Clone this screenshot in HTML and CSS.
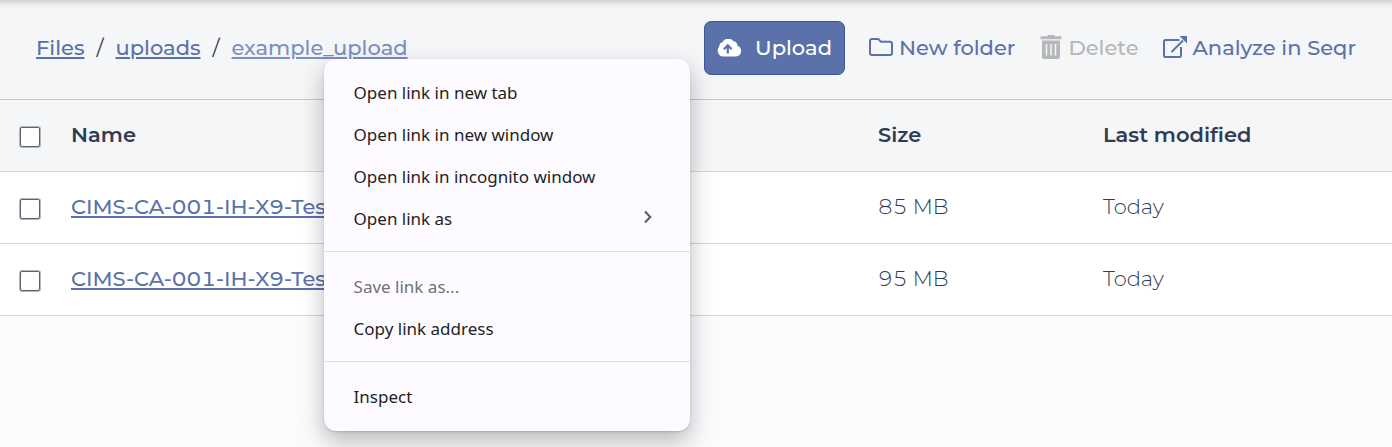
FILE: index.html
```html
<!DOCTYPE html>
<html lang="en">
<head>
<meta charset="utf-8">
<meta name="viewport" content="width=device-width, initial-scale=1">
<title>Files</title>
<link rel="stylesheet" href="styles.css">
</head>
<body>
<header class="toolbar">
  <nav class="crumbs" aria-label="Breadcrumb">
    <a href="#">Files</a>
    <span class="slash">/</span>
    <a href="#">uploads</a>
    <span class="slash">/</span>
    <span class="crumb-current">
      <a class="active" href="#">example_upload</a>
      <div class="menu" role="menu">
        <div class="menu-group">
          <button type="button" role="menuitem">Open link in new tab</button>
          <button type="button" role="menuitem">Open link in new window</button>
          <button type="button" role="menuitem">Open link in incognito window</button>
          <button type="button" role="menuitem" aria-haspopup="true">Open link as
            <svg width="10" height="18" viewBox="0 0 10 18" aria-hidden="true"><path d="M2 1.500 7.300 7 2 12.500" fill="none" stroke="#5a5a5e" stroke-width="2"/></svg>
          </button>
        </div>
        <div class="menu-group">
          <button type="button" role="menuitem" disabled>Save link as...</button>
          <button type="button" role="menuitem">Copy link address</button>
        </div>
        <div class="menu-group">
          <button type="button" role="menuitem">Inspect</button>
        </div>
      </div>
    </span>
  </nav>
  <div class="actions">
    <button type="button" class="upload">
      <svg width="24" height="18" viewBox="0 0 24 18" aria-hidden="true"><path fill="#fff" d="M6 17.500A6 6 0 0 1 2.200 7.600 4.500 4.500 0 0 1 5.500 3.300 6.500 6.500 0 0 1 16.500 2.300 4 4 0 0 1 20.400 6.800 5.500 5.500 0 0 1 19 17.500Z"/><path d="M10.800 14.500V6.500M6.900 10.200l3.900-3.900 3.900 3.900" fill="none" stroke="#5a71aa" stroke-width="2.200"/></svg>
      Upload
    </button>
    <button type="button" class="action">
      <svg width="24" height="20" viewBox="0 0 24 20" aria-hidden="true"><path d="M1 3Q1 1 3 1H8.500Q9.500 1 10.200 1.800L12 3.800H21Q23 3.800 23 5.800V15Q23 17 21 17H3Q1 17 1 15Z" fill="none" stroke="#5a71aa" stroke-width="2"/></svg>
      New folder
    </button>
    <button type="button" class="action" disabled>
      <svg width="23" height="26" viewBox="-1 0 23 26" aria-hidden="true"><path fill="#b5b7b9" d="M.5 1.300H7L8 0h6l1 1.300h6.500v3H.5ZM2 5.500h18V22a2 2 0 0 1-2 2H4a2 2 0 0 1-2-2Z"/><path d="M6.500 9v11.500M11 9v11.500M15.500 9v11.500" stroke="#f4f6f8" stroke-width="1.500"/></svg>
      Delete
    </button>
    <button type="button" class="action">
      <svg width="24" height="24" viewBox="0 0 24 24" aria-hidden="true"><path d="M16.500 4H2.500Q1 4 1 5.500V19.500Q1 21 2.500 21H16.500Q18 21 18 19.500V11M8.500 16 20 4.500" fill="none" stroke="#5a71aa" stroke-width="2"/><path d="M16.500 0H24V7.500Z" fill="#5a71aa"/></svg>
      Analyze in Seqr
    </button>
  </div>
</header>
<table class="files">
  <thead>
    <tr><th class="col-check"><input type="checkbox" aria-label="Select all"></th><th>Name</th><th class="col-size">Size</th><th class="col-date">Last modified</th></tr>
  </thead>
  <tbody>
    <tr><td><input type="checkbox" aria-label="Select first file"></td><td><a href="#">CIMS-CA-001-IH-X9-Test</a></td><td>85 MB</td><td>Today</td></tr>
    <tr><td><input type="checkbox" aria-label="Select second file"></td><td><a href="#">CIMS-CA-001-IH-X9-Test</a></td><td>95 MB</td><td>Today</td></tr>
  </tbody>
</table>
</body>
</html>
```
FILE: styles.css
```css
* { box-sizing: border-box; }

body {
  margin: 0;
  min-height: 100vh;
  background: #fafbfd;
  color: #323c50;
  font: 400 21px/30px Montserrat, Inter, sans-serif;
}

button { font: inherit; border: 0; background: none; padding: 0; cursor: pointer; }
svg { flex: none; }

a {
  color: #5a71aa;
  font-weight: 500;
  text-decoration: underline 2px;
  text-underline-offset: 2px;
}

.toolbar {
  display: flex;
  justify-content: space-between;
  align-items: center;
  padding: 21px 36px 24px;
  background: #f4f6f8;
  border-bottom: 1px solid #c3c7ca;
  box-shadow: inset 0 8px 8px -8px rgba(0, 0, 0, .3);
}

.crumbs { display: flex; gap: 12px; white-space: nowrap; }
.crumb-current { position: relative; }
.active { color: #7c8fc0; }

.actions { display: flex; align-items: center; gap: 24px; }

.upload, .action {
  display: flex;
  align-items: center;
  gap: 6px;
  color: #5a71aa;
  font-weight: 500;
  white-space: nowrap;
}

.upload {
  gap: 14px;
  padding: 11px 12px;
  color: #fff;
  background: #5a71aa;
  border: 1px solid #3e579b;
  border-radius: 7px;
}

.action:disabled { color: #b5b7b9; }

.files { width: 100%; border-collapse: separate; border-spacing: 0; table-layout: fixed; }
.files th, .files td {
  height: 72px;
  padding: 0 12px 2px;
  text-align: left;
  border-bottom: 1px solid #d5d8db;
  white-space: nowrap;
}
.files th { background: #f4f6f8; font-weight: 600; }
.files td { background: #fff; font-weight: 300; font-variant-numeric: tabular-nums; }
.files .col-check { width: 59px; }
.col-size { width: 225px; }
.col-date { width: 301px; }
.files th:first-child, .files td:first-child { padding: 0 0 0 20px; }

input[type="checkbox"] {
  appearance: none;
  display: block;
  width: 20px;
  height: 20px;
  margin: 3px 0 0;
  background: #fff;
  border: 1px solid #5c6270;
  border-radius: 2px;
  box-shadow: 0 0 0 1px #b4b7be;
}
input[type="checkbox"]:checked { background: #5a71aa; }

.menu {
  position: absolute;
  z-index: 1;
  top: 26px;
  left: 92px;
  width: 366px;
  padding-bottom: 2px;
  background: #fdfbff;
  border-radius: 12px;
  box-shadow: 0 10px 24px rgba(0, 0, 0, .27), 0 1px 2px rgba(0, 0, 0, .15);
}
.menu-group { padding: 13px 0 11px; }
.menu-group + .menu-group { padding-top: 14px; border-top: 1px solid #dbe0f0; }
.menu button {
  display: flex;
  justify-content: space-between;
  align-items: center;
  width: 100%;
  height: 42px;
  padding: 0 37px 0 30px;
  color: #1f1f24;
  font: 400 17px/24px "Segoe UI", "Noto Sans", sans-serif;
}
.menu button:disabled { color: #717176; }
```
